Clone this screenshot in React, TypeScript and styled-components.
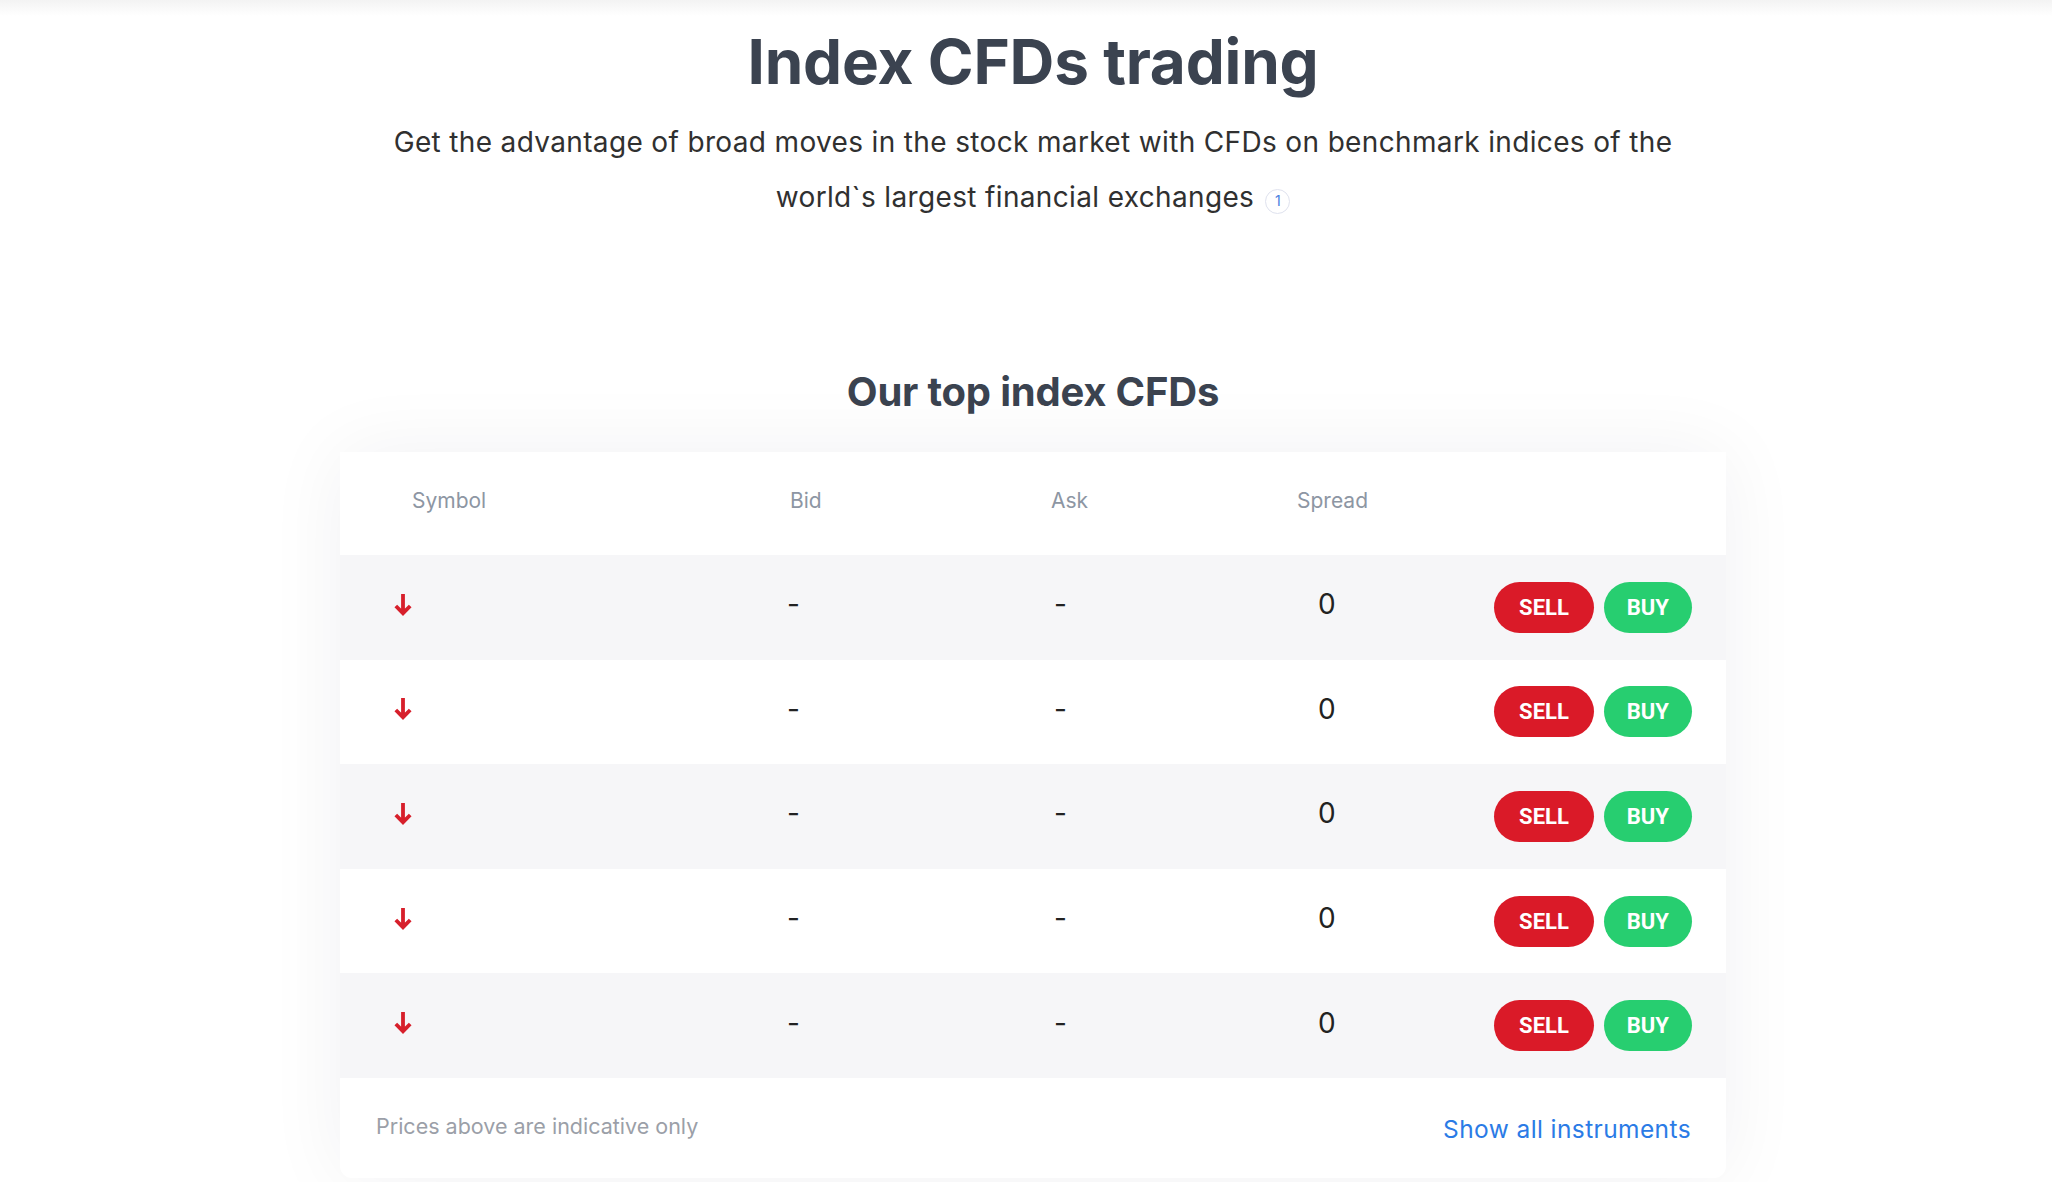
import styled, { createGlobalStyle } from 'styled-components';

const GlobalStyle = createGlobalStyle`
  html,
  body {
    margin: 0;
    padding: 0;
    background: #ffffff;
  }

  body {
    font-family: Inter, 'Noto Sans', sans-serif;
    -webkit-font-smoothing: antialiased;
  }

  * {
    box-sizing: border-box;
  }
`;

const Page = styled.main`
  min-height: 100vh;
  padding: 25px 0 120px 14px;

  display: flex;
  flex-direction: column;
  align-items: center;

  background: linear-gradient(#f3f3f3 0, #ffffff 16px);
`;

const Title = styled.h1`
  margin: 0;

  font-size: 62px;
  line-height: 74px;
  font-weight: 700;
  letter-spacing: -0.2px;

  color: #3b4350;
`;

const Lead = styled.p`
  max-width: 1310px;
  margin: 16px 0 0;

  text-align: center;
  font-size: 28px;
  line-height: 55px;
  letter-spacing: 0.35px;

  color: #303030;
`;

const Footnote = styled.span`
  width: 25px;
  height: 25px;
  margin-left: 11px;

  display: inline-flex;
  align-items: center;
  justify-content: center;
  vertical-align: 1px;

  border: 1px solid #dfe2ee;
  border-radius: 50%;

  font-size: 14px;
  line-height: 1;
  letter-spacing: 0;
  color: #4a7fe0;
`;

const SectionTitle = styled.h2`
  margin: 143px 0 0;

  font-size: 40px;
  line-height: 48px;
  font-weight: 700;
  letter-spacing: -0.2px;

  color: #3b4350;
`;

const Card = styled.section`
  width: 1386px;
  margin-top: 36px;

  display: flex;
  flex-direction: column;

  background-color: #ffffff;
  border-radius: 0 0 12px 12px;
  box-shadow: 0 0 80px rgba(30, 30, 50, 0.06);
  overflow: hidden;
`;

const Row = styled.div<{
  $height: number;
  $striped?: boolean;
}>`
  height: ${(props) => props.$height}px;

  display: grid;
  grid-template-columns: 450px 261px 246px 1fr auto;
  align-items: center;

  background-color: ${(props) => (props.$striped ? '#f6f6f8' : '#ffffff')};
`;

const HeaderRow = styled(Row)`
  padding-bottom: 6px;
`;

const HeadCell = styled.div<{
  $indent?: number;
}>`
  padding-left: ${(props) => props.$indent ?? 0}px;

  font-size: 21px;
  color: #8d96a3;
`;

const ValueCell = styled.div<{
  $indent?: number;
}>`
  margin-top: -6px;
  margin-left: ${(props) => props.$indent ?? 0}px;

  font-size: 28px;
  color: #222222;
`;

const TrendCell = styled.div`
  margin-top: -6px;
  padding-left: 53px;

  display: flex;
  align-items: center;
`;

const Actions = styled.div`
  padding-right: 34px;

  display: flex;
  gap: 10px;
`;

const TradeButton = styled.button<{
  $variant: 'sell' | 'buy';
}>`
  height: 51px;
  padding: 0 ${(props) => (props.$variant === 'sell' ? 25 : 23)}px;

  border: none;
  border-radius: 26px;

  font-family: Roboto, 'Liberation Sans', sans-serif;
  font-size: 22px;
  font-weight: 700;
  color: #ffffff;

  background-color: ${(props) =>
    props.$variant === 'sell' ? '#da1a28' : '#27ce70'};
  cursor: pointer;
`;

const Footer = styled.div`
  height: 100px;
  padding: 0 35px 4px 36px;

  display: flex;
  align-items: center;
  justify-content: space-between;
`;

const Disclaimer = styled.p`
  margin: 0;

  font-size: 21.5px;
  color: #9b9fa8;
`;

const ShowAll = styled.a`
  margin-top: 7px;

  font-size: 24.5px;
  letter-spacing: 0.4px;
  color: #2b7be6;
  text-decoration: none;

  &:hover {
    text-decoration: underline;
  }
`;

function DownArrow() {
  return (
    <svg width="20" height="23" viewBox="0 0 20 23" fill="none">
      <path
        d="M10 1V20M2.8 13L10 20.2L17.2 13"
        stroke="#d71f2b"
        strokeWidth="3.8"
      />
    </svg>
  );
}

const rows = [0, 1, 2, 3, 4];

export default function App() {
  return (
    <>
      <GlobalStyle />
      <Page>
        <Title>Index CFDs trading</Title>
        <Lead>
          Get the advantage of broad moves in the stock market with CFDs on
          benchmark indices of the world`s largest financial exchanges
          <Footnote>1</Footnote>
        </Lead>

        <SectionTitle>Our top index CFDs</SectionTitle>
        <Card>
          <HeaderRow $height={103}>
            <HeadCell $indent={72}>Symbol</HeadCell>
            <HeadCell>Bid</HeadCell>
            <HeadCell>Ask</HeadCell>
            <HeadCell>Spread</HeadCell>
            <div />
          </HeaderRow>
          {rows.map((i) => (
            <Row key={i} $height={104.6} $striped={i % 2 === 0}>
              <TrendCell>
                <DownArrow />
              </TrendCell>
              <ValueCell $indent={-3}>-</ValueCell>
              <ValueCell $indent={3}>-</ValueCell>
              <ValueCell $indent={21}>0</ValueCell>
              <Actions>
                <TradeButton $variant="sell">SELL</TradeButton>
                <TradeButton $variant="buy">BUY</TradeButton>
              </Actions>
            </Row>
          ))}
          <Footer>
            <Disclaimer>Prices above are indicative only</Disclaimer>
            <ShowAll href="#">Show all instruments</ShowAll>
          </Footer>
        </Card>
      </Page>
    </>
  );
}
